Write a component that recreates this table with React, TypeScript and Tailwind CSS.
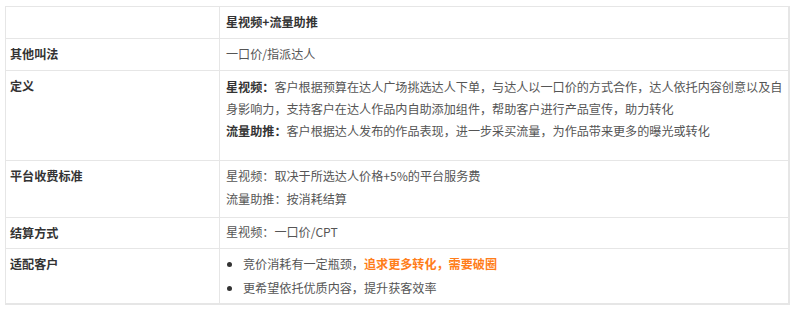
import React from "react";

const font = { fontFamily: '"Noto Sans CJK SC", "Noto Sans", sans-serif' };

function Row({
  h,
  label,
  children,
  last,
}: {
  h: string;
  label?: string;
  children: React.ReactNode;
  last?: boolean;
}) {
  return (
    <div className={`flex ${h} ${last ? "" : "border-b border-[#e6e6e6]"}`}>
      <div className="w-[214px] shrink-0 border-r border-[#e6e6e6] pl-[4px] pt-[4px] font-bold text-[#333]">
        {label}
      </div>
      <div className="flex-1 pl-[6px] pt-[4px] text-[#555]">{children}</div>
    </div>
  );
}

export default function App() {
  return (
    <div className="w-[800px] h-[315px] bg-white pt-[6px] pl-[5px]" style={font}>
      <div className="w-[785px] border-l border-t border-r-2 border-b-2 border-[#e6e6e6] text-[12.1px] leading-[22px]">
        <Row h="h-[32px]" label="">
          <span className="font-bold text-[#333]">星视频+流量助推</span>
        </Row>
        <Row h="h-[32px]" label="其他叫法">
          一口价/指派达人
        </Row>
        <Row h="h-[90px]" label="定义">
          <div>
            <p className="pt-[1px] whitespace-nowrap">
              <span className="font-bold text-[#333]">星视频：</span>
              客户根据预算在达人广场挑选达人下单，与达人以一口价的方式合作，达人依托内容创意以及自
            </p>
            <p className="whitespace-nowrap">
              身影响力，支持客户在达人作品内自助添加组件，帮助客户进行产品宣传，助力转化
            </p>
            <p className="whitespace-nowrap">
              <span className="font-bold text-[#333]">流量助推：</span>
              客户根据达人发布的作品表现，进一步采买流量，为作品带来更多的曝光或转化
            </p>
          </div>
        </Row>
        <Row h="h-[57px]" label="平台收费标准">
          <p>星视频：取决于所选达人价格+5%的平台服务费</p>
          <p className="mt-[1px]">流量助推：按消耗结算</p>
        </Row>
        <Row h="h-[31px]" label="结算方式">
          <p className="-mt-[1px]">星视频：一口价/CPT</p>
        </Row>
        <Row h="h-[54px]" label="适配客户" last>
          <ul className="flex flex-col gap-[2px]">
            <li className="flex items-center">
              <span className="ml-[1px] mr-[11px] inline-block h-[5px] w-[5px] rounded-full bg-[#333]" />
              <span>竞价消耗有一定瓶颈，</span>
              <span className="font-bold text-[#ff7d1a]">追求更多转化，需要破圈</span>
            </li>
            <li className="flex items-center">
              <span className="ml-[1px] mr-[11px] inline-block h-[5px] w-[5px] rounded-full bg-[#333]" />
              <span>更希望依托优质内容，提升获客效率</span>
            </li>
          </ul>
        </Row>
      </div>
    </div>
  );
}
